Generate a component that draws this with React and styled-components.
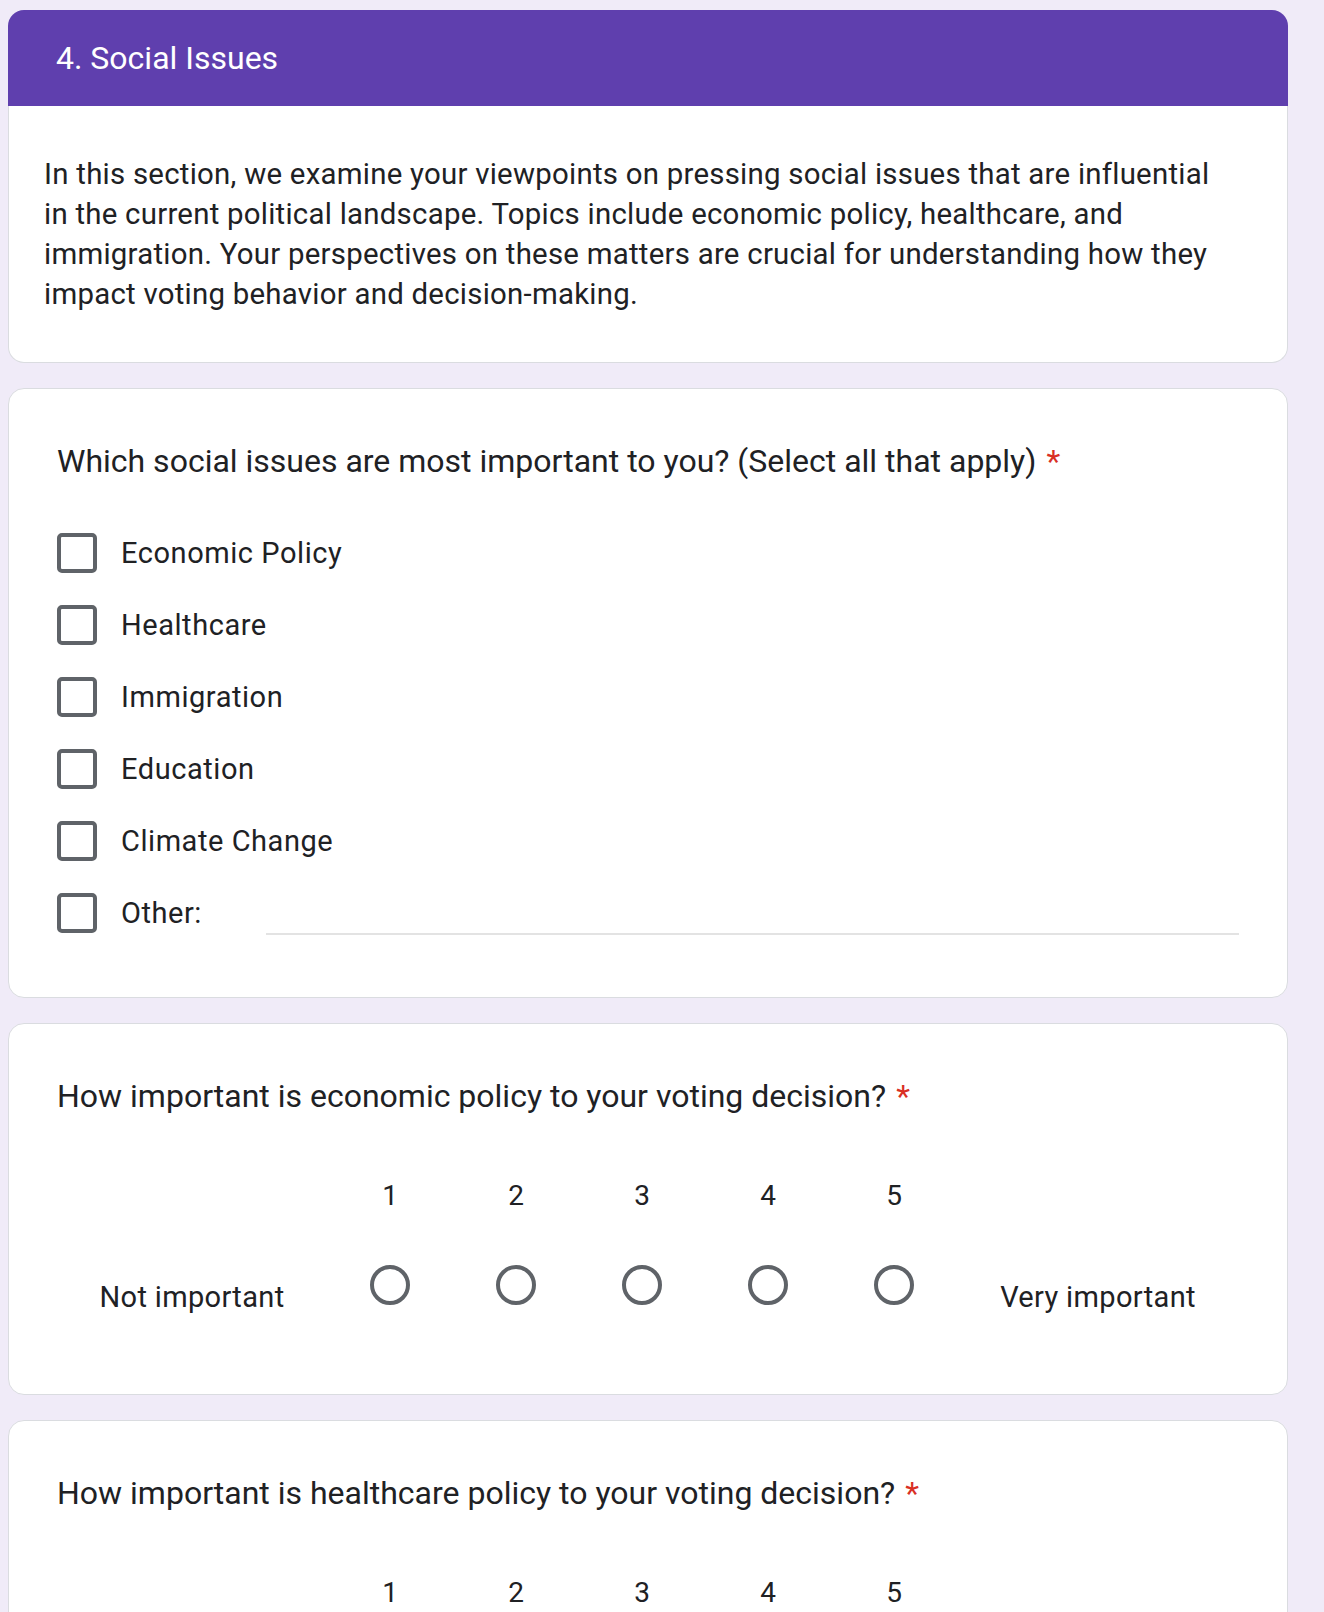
import React from 'react';
import styled, { createGlobalStyle } from 'styled-components';

const GlobalStyle = createGlobalStyle`
	body {
		margin: 0;
		background-color: #f0ebf8;
		font-family: Roboto, "Liberation Sans", Arial, sans-serif;
		color: #202124;
	}
`;

const issues = ['Economic Policy', 'Healthcare', 'Immigration', 'Education', 'Climate Change'];
const scale = [1, 2, 3, 4, 5];

const ScaleQuestion = ({ title }) => (
	<Card>
		<Question>
			{title}
			<Required>*</Required>
		</Question>
		<Scale>
			<ScaleLabel width={270}>Not important</ScaleLabel>
			{scale.map(n => (
				<ScaleColumn key={n}>
					<ScaleNumber>{n}</ScaleNumber>
					<Radio />
				</ScaleColumn>
			))}
			<ScaleLabel width={282}>Very important</ScaleLabel>
		</Scale>
	</Card>
);

const App = () => {
	return (
		<Page>
			<GlobalStyle />
			<Section>
				<SectionHeader>
					<SectionTitle>4. Social Issues</SectionTitle>
				</SectionHeader>
				<SectionBody>
					<Description>
						In this section, we examine your viewpoints on pressing social issues that are influential
						in the current political landscape. Topics include economic policy, healthcare, and
						immigration. Your perspectives on these matters are crucial for understanding how they
						impact voting behavior and decision-making.
					</Description>
				</SectionBody>
			</Section>

			<Card>
				<Question>
					Which social issues are most important to you? (Select all that apply)
					<Required>*</Required>
				</Question>
				<Options>
					{issues.map(issue => (
						<Option key={issue}>
							<Checkbox />
							<OptionLabel>{issue}</OptionLabel>
						</Option>
					))}
					<Option>
						<Checkbox />
						<OptionLabel>Other:</OptionLabel>
						<OtherInput />
					</Option>
				</Options>
			</Card>

			<ScaleQuestion title="How important is economic policy to your voting decision?" />
			<ScaleQuestion title="How important is healthcare policy to your voting decision?" />
		</Page>
	);
};
export default App;

const Page = styled.div`
	width: 1280px;
	padding: 10px 0 40px 8px;
	display: flex;
	flex-direction: column;
	gap: 25px;
`;

const Section = styled.div`
	display: flex;
	flex-direction: column;
`;

const SectionHeader = styled.div`
	height: 96px;
	display: flex;
	align-items: center;
	padding: 0 48px;
	background-color: #5f3fae;
	border-radius: 16px 16px 0 0;
`;

const SectionTitle = styled.h2`
	margin: 0;
	font-size: 32px;
	font-weight: 400;
	color: #fff;
`;

const SectionBody = styled.div`
	background-color: #fff;
	border: 1px solid #dadce0;
	border-top: none;
	border-radius: 0 0 16px 16px;
	padding: 48px 60px 48px 35px;
`;

const Description = styled.p`
	margin: 0;
	font-size: 29.4px;
	line-height: 40px;
	letter-spacing: 0.25px;
	color: #202124;
`;

const Card = styled.div`
	background-color: #fff;
	border: 1px solid #dadce0;
	border-radius: 16px;
	padding: 48px;
`;

const Question = styled.div`
	font-size: 32px;
	line-height: 48px;
	color: #202124;
`;

const Required = styled.span`
	color: #d93025;
	padding-left: 10px;
`;

const Options = styled.div`
	margin-top: 32px;
	display: flex;
	flex-direction: column;
`;

const Option = styled.div`
	height: 72px;
	display: flex;
	align-items: center;
`;

const Checkbox = styled.span`
	width: 40px;
	height: 40px;
	box-sizing: border-box;
	border: 4px solid #5f6368;
	border-radius: 5px;
	flex-shrink: 0;
`;

const OptionLabel = styled.span`
	margin-left: 24px;
	font-size: 29px;
	letter-spacing: 0.55px;
	color: #202124;
`;

const OtherInput = styled.div`
	flex: 1;
	height: 44px;
	margin-left: 64px;
	border-bottom: 2px solid #e3e3e3;
	box-sizing: border-box;
`;

const Scale = styled.div`
	margin-top: 56px;
	padding-bottom: 29px;
	display: flex;
	align-items: flex-end;
`;

const ScaleLabel = styled.div`
	width: ${p => p.width}px;
	text-align: center;
	font-size: 29px;
	line-height: 40px;
	letter-spacing: 0.35px;
	color: #202124;
`;

const ScaleColumn = styled.div`
	width: 126px;
	display: flex;
	flex-direction: column;
	align-items: center;
	padding-bottom: 12px;
`;

const ScaleNumber = styled.div`
	height: 40px;
	line-height: 40px;
	font-size: 28px;
	color: #202124;
	margin-bottom: 49px;
`;

const Radio = styled.span`
	width: 40px;
	height: 40px;
	box-sizing: border-box;
	border: 4px solid #5f6368;
	border-radius: 50%;
`;
